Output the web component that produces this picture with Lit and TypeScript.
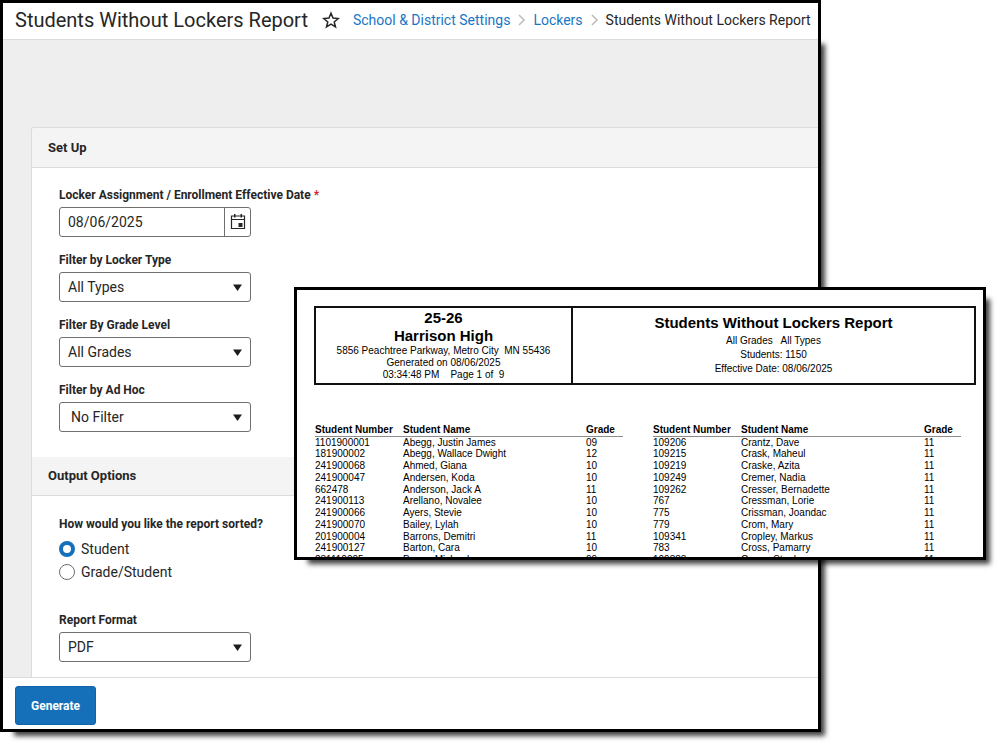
import { LitElement, html, css } from "lit";
import { customElement, property } from "lit/decorators.js";

type Row = [string, string, string];

const LEFT_ROWS: Row[] = [
  ["1101900001", "Abegg, Justin James", "09"],
  ["181900002", "Abegg, Wallace Dwight", "12"],
  ["241900068", "Ahmed, Giana", "10"],
  ["241900047", "Andersen, Koda", "10"],
  ["662478", "Anderson, Jack A", "11"],
  ["241900113", "Arellano, Novalee", "10"],
  ["241900066", "Ayers, Stevie", "10"],
  ["241900070", "Bailey, Lylah", "10"],
  ["201900004", "Barrons, Demitri", "11"],
  ["241900127", "Barton, Cara", "10"],
  ["231110005", "Bauer, Michael", "09"],
];

const RIGHT_ROWS: Row[] = [
  ["109206", "Crantz, Dave", "11"],
  ["109215", "Crask, Maheul", "11"],
  ["109219", "Craske, Azita", "11"],
  ["109249", "Cremer, Nadia", "11"],
  ["109262", "Cresser, Bernadette", "11"],
  ["767", "Cressman, Lorie", "11"],
  ["775", "Crissman, Joandac", "11"],
  ["779", "Crom, Mary", "11"],
  ["109341", "Cropley, Markus", "11"],
  ["783", "Cross, Pamarry", "11"],
  ["109383", "Cruse, Stephen", "11"],
];

@customElement("student-table")
class StudentTable extends LitElement {
  @property({ attribute: false }) rows: Row[] = [];

  static styles = css`
    :host {
      display: block;
      font: 10px "Liberation Sans", Arial, sans-serif;
      color: #000;
    }
    .table {
      width: 100%;
      border-collapse: collapse;
      table-layout: fixed;
    }
    .number {
      width: 88px;
    }
    .grade {
      width: 37px;
    }
    th,
    td {
      padding: 0;
      text-align: left;
      white-space: nowrap;
      line-height: 12px;
    }
    th {
      border-bottom: 1px solid #8c8c8c;
    }
    tbody tr:nth-child(4n + 1) td {
      line-height: 11px;
    }
  `;

  render() {
    return html`
      <table class="table">
        <thead>
          <tr>
            <th class="number">Student Number</th>
            <th>Student Name</th>
            <th class="grade">Grade</th>
          </tr>
        </thead>
        <tbody>
          ${this.rows.map(
            (r) => html`<tr><td>${r[0]}</td><td>${r[1]}</td><td>${r[2]}</td></tr>`
          )}
        </tbody>
      </table>
    `;
  }
}

@customElement("report-preview")
class ReportPreview extends LitElement {
  static styles = css`
    :host {
      display: block;
      box-sizing: border-box;
      isolation: isolate;
      font-family: "Liberation Sans", Arial, sans-serif;
      color: #000;
    }
    :host::before {
      content: "";
      position: absolute;
      z-index: -1;
      inset: 8px 0 0 10px;
      box-shadow: 4px 4px 5px rgba(0, 0, 0, 0.75);
    }
    .sheet {
      box-sizing: border-box;
      height: 100%;
      border: 3px solid #000;
      background: #fff;
      overflow: hidden;
      padding: 16px 7px 0 17px;
    }
    .head {
      display: grid;
      grid-template-columns: 257px 1fr;
      border: 2px solid #111;
      height: 79px;
      box-sizing: border-box;
      text-align: center;
      font-size: 10px;
      line-height: 12px;
    }
    .line {
      white-space: pre;
    }
    .school {
      border-right: 2px solid #111;
      padding-top: 1px;
    }
    .summary {
      padding-top: 5px;
      line-height: 14px;
    }
    .title {
      margin: 0;
      font-size: 15px;
      line-height: 18px;
      font-weight: 700;
    }
    .summary .title {
      line-height: 20px;
      margin-bottom: 1px;
    }
    .lists {
      display: grid;
      grid-template-columns: 308px 308px;
      column-gap: 30px;
      margin-top: 39px;
      padding-left: 1px;
    }
  `;

  render() {
    return html`
      <div class="sheet">
        <div class="head">
          <div class="school">
            <h2 class="title">25-26</h2>
            <h2 class="title">Harrison High</h2>
            <div class="line">5856 Peachtree Parkway, Metro City  MN 55436</div>
            <div class="line">Generated on 08/06/2025</div>
            <div class="line">03:34:48 PM    Page 1 of  9</div>
          </div>
          <div class="summary">
            <h2 class="title">Students Without Lockers Report</h2>
            <div class="line">All Grades   All Types</div>
            <div class="line">Students: 1150</div>
            <div class="line">Effective Date: 08/06/2025</div>
          </div>
        </div>
        <div class="lists">
          <student-table .rows=${LEFT_ROWS}></student-table>
          <student-table .rows=${RIGHT_ROWS}></student-table>
        </div>
      </div>
    `;
  }
}

@customElement("app-root")
class AppRoot extends LitElement {
  static styles = css`
    :host {
      display: block;
      position: relative;
      height: 100vh;
      box-sizing: border-box;
      padding: 0 180px 15px 0;
      overflow: hidden;
      background: #fff;
      font-family: Roboto, sans-serif;
      color: #262626;
    }
    .window {
      position: relative;
      isolation: isolate;
      height: 100%;
    }
    .window::before {
      content: "";
      position: absolute;
      z-index: -1;
      inset: 40px 0 0 10px;
      box-shadow: 4px 4px 5px rgba(0, 0, 0, 0.75);
    }
    .frame {
      display: flex;
      flex-direction: column;
      box-sizing: border-box;
      height: 100%;
      border: 3px solid #000;
      background: #fff;
      overflow: hidden;
    }
    .top {
      display: flex;
      align-items: center;
      flex: none;
      box-sizing: border-box;
      height: 37px;
      padding: 0 8px 3px 12px;
      border-bottom: 1px solid #dcdcdc;
      white-space: nowrap;
    }
    .heading {
      margin: 0;
      font-size: 20px;
      line-height: 32px;
      font-weight: 400;
    }
    .star {
      border: 0;
      padding: 0;
      margin: 0 13px 0 14px;
      background: none;
      color: inherit;
      display: flex;
    }
    .crumbs {
      display: flex;
      align-items: center;
      gap: 7px;
      font-size: 14px;
      line-height: 32px;
    }
    .crumbs a {
      color: #1976c5;
      text-decoration: none;
    }
    .body {
      flex: 1;
      min-height: 0;
      overflow: hidden;
      background: #eee;
      padding: 87px 0 0 28px;
    }
    .card {
      border: 1px solid #dcdcdc;
      border-right: 0;
      border-top-left-radius: 3px;
      background: #fff;
      overflow: hidden;
    }
    .section {
      margin: 0;
      padding: 0 16px;
      font-size: 13px;
      line-height: 39px;
      font-weight: 700;
      background: #f4f4f4;
      border-bottom: 1px solid #dcdcdc;
    }
    .inner {
      line-height: 38px;
    }
    .fields {
      display: flex;
      flex-direction: column;
      align-items: flex-start;
      gap: 15px;
      padding: 19px 27px 25px;
    }
    .field {
      display: flex;
      flex-direction: column;
      border: 0;
      margin: 0;
      padding: 0;
      min-width: 0;
    }
    .label {
      padding: 0;
      font-size: 12px;
      line-height: 16px;
      font-weight: 700;
      margin-bottom: 4px;
    }
    legend.label {
      margin-bottom: 5px;
    }
    .required {
      color: #c8232c;
    }
    .control {
      display: flex;
      position: relative;
      box-sizing: border-box;
      width: 192px;
      height: 30px;
      border: 1px solid #6f6f6f;
      border-radius: 3px;
      background: #fff;
    }
    .input,
    .select {
      appearance: none;
      box-sizing: border-box;
      flex: 1;
      min-width: 0;
      border: 0;
      margin: 0;
      padding: 0 8px;
      background: none;
      font: 14px Roboto, sans-serif;
      color: inherit;
      outline: none;
    }
    .indent {
      padding-left: 11px;
    }
    .arrow {
      position: absolute;
      right: 8px;
      top: 11px;
      pointer-events: none;
    }
    .calendar {
      width: 26px;
      border: 0;
      border-left: 1px solid #6f6f6f;
      padding: 0 0 1px 0;
      background: none;
      color: inherit;
      display: grid;
      place-items: center;
    }
    .choice {
      display: flex;
      align-items: center;
      gap: 6px;
      height: 23px;
      font-size: 14px;
    }
    .radio {
      appearance: none;
      box-sizing: border-box;
      width: 16px;
      height: 16px;
      margin: 0;
      border: 1px solid #6f6f6f;
      border-radius: 50%;
      background: #fff;
    }
    .radio:checked {
      border: 4px solid #1570b9;
    }
    .output {
      gap: 29px;
      padding-top: 20px;
    }
    .bottom {
      flex: none;
      padding: 8px 12px 4px;
      border-top: 1px solid #dcdcdc;
      background: #fff;
    }
    .generate {
      height: 39px;
      border: 1px solid #0f63a8;
      border-radius: 3px;
      padding: 0 15px;
      background: #1570b9;
      color: #fff;
      font: 700 12px Roboto, sans-serif;
      display: block;
    }
    .preview {
      position: absolute;
      left: 294px;
      right: 15px;
      top: 287px;
      height: 273px;
    }
  `;

  private chevron() {
    return html`<svg width="9" height="12" viewBox="0 0 9 12" aria-hidden="true">
      <path d="M2 1l5 5-5 5" fill="none" stroke="#bdbdbd" stroke-width="1.6" />
    </svg>`;
  }

  private select(id: string, label: string, value: string, indent = false) {
    return html`
      <div class="field">
        <label class="label" for=${id}>${label}</label>
        <div class="control">
          <select class=${indent ? "select indent" : "select"} id=${id}>
            <option>${value}</option>
          </select>
          <svg class="arrow" width="9" height="7" viewBox="0 0 9 7" aria-hidden="true">
            <path d="M0 0.500h9l-4.500 6.500z" fill="#1c1c1c" />
          </svg>
        </div>
      </div>
    `;
  }

  render() {
    return html`
      <div class="window">
        <div class="frame">
          <header class="top">
            <h1 class="heading">Students Without Lockers Report</h1>
            <button class="star" aria-label="Favorite">
              <svg width="18" height="18" viewBox="0 0 18 18">
                <path
                  d="M9 2.200l2 4.900 5.300.400-4.100 3.400 1.300 5.100L9 13.200 4.500 16l1.300-5.100-4.100-3.400 5.300-.400z"
                  fill="none"
                  stroke="currentColor"
                  stroke-width="1.500"
                />
              </svg>
            </button>
            <nav class="crumbs">
              <a href="#settings">School &amp; District Settings</a>
              ${this.chevron()}
              <a href="#lockers">Lockers</a>
              ${this.chevron()}
              <span>Students Without Lockers Report</span>
            </nav>
          </header>
          <main class="body">
            <div class="card">
              <h2 class="section">Set Up</h2>
              <div class="fields">
                <div class="field">
                  <label class="label" for="date"
                    >Locker Assignment / Enrollment Effective Date
                    <span class="required">*</span></label
                  >
                  <div class="control">
                    <input class="input" id="date" type="text" value="08/06/2025" />
                    <button class="calendar" aria-label="Open calendar">
                      <svg width="16" height="17" viewBox="0 0 16 17">
                        <path
                          d="M1.500 3h13v12.500h-13zM1.500 6.500h13"
                          fill="none"
                          stroke="currentColor"
                          stroke-width="1.200"
                        />
                        <path d="M4 1h1.500v3.500H4zM10.500 1H12v3.500h-1.500zM8.500 10h4v4h-4z" fill="currentColor" />
                      </svg>
                    </button>
                  </div>
                </div>
                ${this.select("type", "Filter by Locker Type", "All Types")}
                ${this.select("grade", "Filter By Grade Level", "All Grades")}
                ${this.select("adhoc", "Filter by Ad Hoc", "No Filter", true)}
              </div>
              <h2 class="section inner">Output Options</h2>
              <div class="fields output">
                <fieldset class="field">
                  <legend class="label">How would you like the report sorted?</legend>
                  <label class="choice"
                    ><input class="radio" type="radio" name="sort" checked />Student</label
                  >
                  <label class="choice"
                    ><input class="radio" type="radio" name="sort" />Grade/Student</label
                  >
                </fieldset>
                ${this.select("format", "Report Format", "PDF")}
              </div>
            </div>
          </main>
          <footer class="bottom">
            <button class="generate">Generate</button>
          </footer>
        </div>
      </div>
      <report-preview class="preview"></report-preview>
    `;
  }
}
